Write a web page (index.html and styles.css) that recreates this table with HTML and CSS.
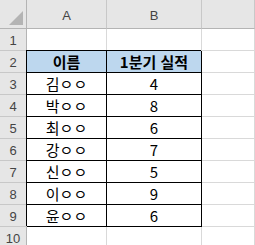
FILE: index.html
```html
<!DOCTYPE html>
<html lang="ko">
<head>
  <meta charset="UTF-8" />
  <meta name="viewport" content="width=device-width, initial-scale=1.0" />
  <title>1분기 실적</title>
  <link rel="stylesheet" href="styles.css">
</head>
<body>
  <div class="sheet">
    <div class="corner"><span class="tri"></span></div>
    <div class="colhead">A</div>
    <div class="colhead">B</div>
    <div class="colhead"></div>

    <div class="rowhead">1</div><div class="cell"></div><div class="cell"></div><div class="cell"></div>
    <div class="rowhead">2</div><div class="cell box head">이름</div><div class="cell box head">1분기 실적</div><div class="cell"></div>
    <div class="rowhead">3</div><div class="cell box">김ㅇㅇ</div><div class="cell box">4</div><div class="cell"></div>
    <div class="rowhead">4</div><div class="cell box">박ㅇㅇ</div><div class="cell box">8</div><div class="cell"></div>
    <div class="rowhead">5</div><div class="cell box">최ㅇㅇ</div><div class="cell box">6</div><div class="cell"></div>
    <div class="rowhead">6</div><div class="cell box">강ㅇㅇ</div><div class="cell box">7</div><div class="cell"></div>
    <div class="rowhead">7</div><div class="cell box">신ㅇㅇ</div><div class="cell box">5</div><div class="cell"></div>
    <div class="rowhead">8</div><div class="cell box">이ㅇㅇ</div><div class="cell box">9</div><div class="cell"></div>
    <div class="rowhead">9</div><div class="cell box">윤ㅇㅇ</div><div class="cell box">6</div><div class="cell"></div>
    <div class="rowhead">10</div><div class="cell"></div><div class="cell"></div><div class="cell"></div>
  </div>
</body>
</html>
```

FILE: styles.css
```css
body { margin: 0; background: #fff; font-family: "Noto Sans CJK KR", "Noto Sans", sans-serif; color: #000; }
.sheet { width: 255px; height: 245px; overflow: hidden; display: grid; grid-template-columns: 27px 80px 95px 1fr; grid-template-rows: 29px; grid-auto-rows: 22px; }
.sheet > div { box-sizing: border-box; display: flex; align-items: center; justify-content: center; border-right: 1px solid #d9d9d9; border-bottom: 1px solid #d9d9d9; }

/* 머리글 (열/행 번호) */
.corner, .colhead, .rowhead { background: #e6e6e6; color: #444; font-family: "Liberation Sans", sans-serif; font-size: 13px; }
.corner { position: relative; border-right-color: #b4b4b4 !important; border-bottom-color: #b4b4b4 !important; }
.tri { position: absolute; right: 3px; bottom: 3px; width: 0; height: 0; border-left: 14px solid transparent; border-bottom: 14px solid #b4b4b4; }
.colhead { border-right-color: #c8c8c8 !important; border-bottom-color: #b4b4b4 !important; padding-top: 2px; }
.rowhead { border-right-color: #b4b4b4 !important; border-bottom-color: #c8c8c8 !important; padding-top: 1px; }

/* 셀 */
.cell { font-size: 15px; line-height: 1; }
.box { border-right-color: #000 !important; border-bottom-color: #000 !important; box-shadow: -1px -1px 0 #000; }
.head { background: #bdd7ee; font-weight: bold; }
```
